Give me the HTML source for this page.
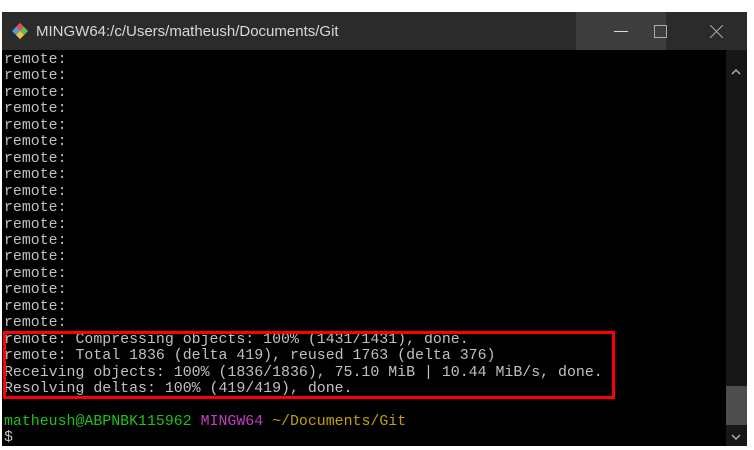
<!DOCTYPE html>
<html><head><style>
body{margin:0;width:754px;height:450px;background:#fff;position:relative;overflow:hidden}
.win{position:absolute;left:2px;top:12px;width:745px;height:434px;background:#000}
.title{position:absolute;left:0;top:0;width:745px;height:38px;background:#2b2b2b;color:#d8d8d8;font:15px "Liberation Sans",sans-serif}
.title span{position:absolute;left:34px;top:11px}
.min{position:absolute;left:574px;top:0;width:90px;height:38px;background:#3d3d3d}
.term{position:absolute;left:2px;top:40px;font:14.9px/16.45px "Liberation Mono",monospace;color:#c0c0c0;white-space:pre}
.sb{position:absolute;left:724px;top:38px;width:21px;height:396px;background:#171717}
.thumb{position:absolute;left:724px;top:374px;width:21px;height:39px;background:#4d4d4d}
.box{position:absolute;left:3px;top:331px;width:606px;height:62px;border:3px solid #f00}
.g{color:#20c020}.m{color:#c040c0}.y{color:#c0a000}
</style></head><body>
<div class="win">
<div class="title">
<svg style="position:absolute;left:9px;top:10px" width="18" height="18" viewBox="0 0 18 18"><path d="M9 1L17 9L9 17L1 9Z" fill="#4a9ee0"/><path d="M9 1L17 9L13 13L5 5Z" fill="#e05050"/><path d="M13 5L17 9L9 17L9 9Z" fill="#58c050"/><path d="M9 17L5 13L9 9L13 13Z" fill="#f0c040"/></svg>
<span>MINGW64:/c/Users/matheush/Documents/Git</span>
<div class="min"><div style="position:absolute;left:38px;top:19px;width:14px;height:1px;background:#ddd"></div></div>
<div style="position:absolute;left:652px;top:13px;width:11px;height:11px;border:1px solid #aaa"></div>
<svg style="position:absolute;left:708px;top:13px" width="13" height="13"><path d="M0 0L13 13M13 0L0 13" stroke="#aaa"/></svg>
</div>
<div class="sb"></div><div class="thumb"></div>
<svg style="position:absolute;left:729px;top:57px" width="10" height="6"><path d="M1 5L5 1L9 5" stroke="#aaa" fill="none" stroke-width="1.5"/></svg>
<svg style="position:absolute;left:729px;top:422px" width="10" height="6"><path d="M1 1L5 5L9 1" stroke="#aaa" fill="none" stroke-width="1.5"/></svg>
<div class="term">remote:
remote:
remote:
remote:
remote:
remote:
remote:
remote:
remote:
remote:
remote:
remote:
remote:
remote:
remote:
remote:
remote:
remote: Compressing objects: 100% (1431/1431), done.
remote: Total 1836 (delta 419), reused 1763 (delta 376)
Receiving objects: 100% (1836/1836), 75.10 MiB | 10.44 MiB/s, done.
Resolving deltas: 100% (419/419), done.

<span class="g">matheush@ABPNBK115962</span> <span class="m">MINGW64</span> <span class="y">~/Documents/Git</span>
$</div>
</div>
<div class="box"></div>
</body></html>
